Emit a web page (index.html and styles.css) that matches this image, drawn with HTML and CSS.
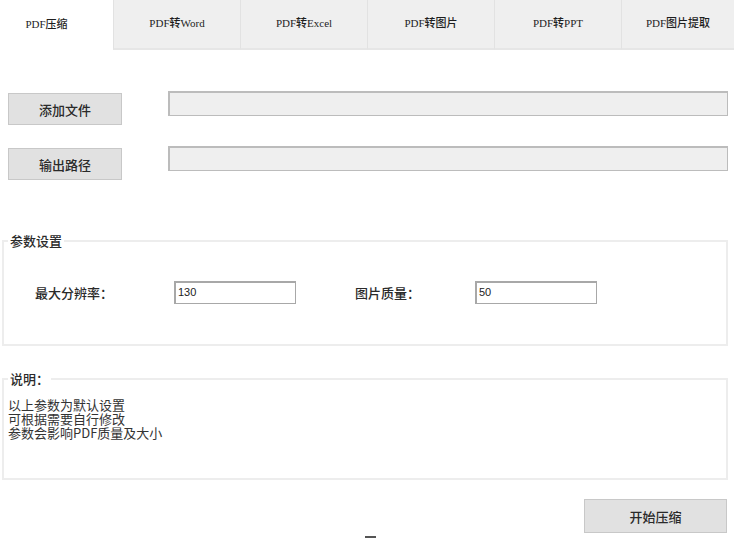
FILE: index.html
```html
<!DOCTYPE html>
<html lang="zh">
<head>
<meta charset="utf-8">
<title>PDF压缩</title>
<link rel="stylesheet" href="styles.css">
</head>
<body>
<div class="app">
  <div class="tabs">
    <div class="tab active">PDF压缩</div>
    <div class="tab">PDF转Word</div>
    <div class="tab">PDF转Excel</div>
    <div class="tab">PDF转图片</div>
    <div class="tab">PDF转PPT</div>
    <div class="tab last">PDF图片提取</div>
  </div>

  <div class="file-row first">
    <button class="btn btn-side">添加文件</button>
    <div class="field"></div>
  </div>
  <div class="file-row second">
    <button class="btn btn-side">输出路径</button>
    <div class="field"></div>
  </div>

  <fieldset class="group params">
    <legend>参数设置</legend>
    <div class="param-row">
      <span class="param-label lbl1">最大分辨率：</span>
      <div class="input">130</div>
      <span class="param-label lbl2">图片质量：</span>
      <div class="input">50</div>
    </div>
  </fieldset>

  <fieldset class="group notes">
    <legend>说明：</legend>
    <div class="note-text">
      <div>以上参数为默认设置</div>
      <div>可根据需要自行修改</div>
      <div>参数会影响PDF质量及大小</div>
    </div>
  </fieldset>

  <div class="action-row">
    <button class="btn btn-start">开始压缩</button>
  </div>
  <div class="caret"></div>
</div>
</body>
</html>
```

FILE: styles.css
```css
html, body {
  margin: 0;
  padding: 0;
  background: #ffffff;
}
body {
  width: 734px;
  height: 538px;
  overflow: hidden;
  font-family: "Noto Sans CJK SC", "Liberation Sans", sans-serif;
  color: #222;
}
.app {
  width: 734px;
}
.tabs {
  display: flex;
  height: 50px;
}
.tab {
  width: 127px;
  box-sizing: border-box;
  height: 50px;
  display: flex;
  align-items: center;
  justify-content: center;
  padding-bottom: 5px;
  font-family: "Liberation Serif", "Noto Sans CJK SC", serif;
  font-size: 11px;
  font-weight: 500;
  color: #1e1e1e;
  background: #efefef;
  border-left: 1px solid #e2e2e2;
  border-bottom: 2px solid #e6e6e6;
}
.tab.active {
  width: 113px;
  background: #ffffff;
  border: none;
  padding-right: 20px;
}
.tab.last {
  flex: 1;
}
.file-row {
  display: flex;
  align-items: flex-start;
  padding-left: 8px;
  height: 34px;
}
.file-row.first {
  margin-top: 41px;
}
.file-row.second {
  margin-top: 21px;
}
.btn {
  font-family: "Noto Sans CJK SC", sans-serif;
  font-size: 13px;
  font-weight: 500;
  color: #2a2a2a;
  background: #e1e1e1;
  border: 1px solid #c8c8c8;
  padding: 0;
  margin: 0;
}
.btn-side {
  width: 114px;
  height: 32px;
  margin-top: 2px;
}
.field {
  margin-left: 46px;
  width: 560px;
  height: 25px;
  box-sizing: border-box;
  background: #efefef;
  border: 1px solid #bcbcbc;
  border-top-width: 2px;
  border-left-width: 2px;
}
.group {
  margin: 0 0 0 2px;
  width: 726px;
  box-sizing: border-box;
  border: 2px solid #ededed;
  padding: 0;
}
.group legend {
  font-size: 13px;
  font-weight: 500;
  line-height: 16px;
  margin-left: 4px;
  padding: 0 2px;
  color: #2a2a2a;
}
.params {
  margin-top: 53px;
  height: 113px;
}
.param-row {
  display: flex;
  align-items: center;
  padding-left: 31px;
  margin-top: 32px;
  height: 23px;
}
.param-label {
  font-size: 13px;
  font-weight: 500;
  color: #2a2a2a;
}
.lbl1 {
  width: 139px;
}
.lbl2 {
  width: 120px;
  margin-left: 59px;
}
.input {
  width: 122px;
  height: 23px;
  box-sizing: border-box;
  border: 1px solid #a8a8a8;
  border-top-width: 2px;
  border-left-width: 2px;
  font-family: "Liberation Sans", sans-serif;
  font-size: 11px;
  line-height: 18px;
  padding-left: 2px;
  color: #222;
}
.notes {
  margin-top: 25px;
  height: 109px;
}
.note-text {
  font-size: 13px;
  line-height: 14px;
  color: #333;
  padding: 11px 0 0 4px;
}
.action-row {
  display: flex;
  justify-content: flex-end;
  padding-right: 7px;
  margin-top: 19px;
}
.btn-start {
  width: 143px;
  height: 34px;
}
.caret {
  margin: 3px 0 0 365px;
  width: 11px;
  height: 3px;
  background: #555;
}
```
